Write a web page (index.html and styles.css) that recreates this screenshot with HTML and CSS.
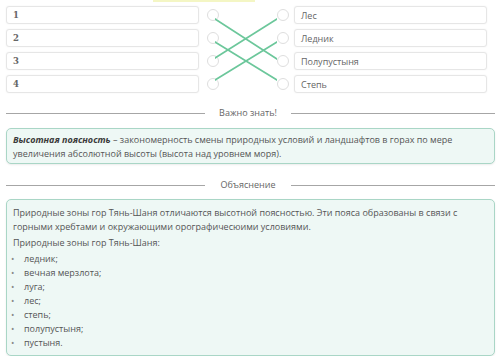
FILE: index.html
```html
<!DOCTYPE html>
<html lang="ru">
<head>
    <meta charset="UTF-8">
    <meta name="viewport" content="width=device-width, initial-scale=1.0">
    <title>Высотная поясность</title>
    <link rel="stylesheet" href="styles.css">
</head>
<body>
    <div class="top-mark"></div>

    <div class="match">
        <div class="cell left r1">1</div>
        <div class="cell left r2">2</div>
        <div class="cell left r3">3</div>
        <div class="cell left r4">4</div>

        <span class="dot dl r1"></span>
        <span class="dot dl r2"></span>
        <span class="dot dl r3"></span>
        <span class="dot dl r4"></span>

        <svg class="links" width="62" height="87" viewBox="0 0 62 87">
            <line x1="0" y1="13" x2="62" y2="53" />
            <line x1="0" y1="36" x2="62" y2="74" />
            <line x1="0" y1="52" x2="62" y2="13" />
            <line x1="0" y1="74" x2="62" y2="36" />
        </svg>

        <span class="dot dr r1"></span>
        <span class="dot dr r2"></span>
        <span class="dot dr r3"></span>
        <span class="dot dr r4"></span>

        <div class="cell right r1">Лес</div>
        <div class="cell right r2">Ледник</div>
        <div class="cell right r3">Полупустыня</div>
        <div class="cell right r4">Степь</div>
    </div>

    <div class="divider first"><span>Важно знать!</span></div>
    <div class="note short">
        <b>Высотная поясность</b> – закономерность смены природных условий и ландшафтов в горах по мере увеличения абсолютной высоты (высота над уровнем моря).
    </div>

    <div class="divider"><span>Объяснение</span></div>
    <div class="note">
        <p>Природные зоны гор Тянь-Шаня отличаются высотной поясностью. Эти пояса образованы в связи с горными хребтами и окружающими орографичесюими условиями.</p>
        <p>Природные зоны гор Тянь-Шаня:</p>
        <ul>
            <li>ледник;</li>
            <li>вечная мерзлота;</li>
            <li>луга;</li>
            <li>лес;</li>
            <li>степь;</li>
            <li>полупустыня;</li>
            <li>пустыня.</li>
        </ul>
    </div>
</body>
</html>
```

FILE: styles.css
```css
body {
    margin: 0;
    background: #fff;
    font-family: "Open Sans", "Noto Sans", sans-serif;
    font-size: 9px;
    color: #555;
    width: 500px;
    position: relative;
}
.top-mark {
    position: absolute;
    left: 153px;
    top: 0;
    width: 102px;
    height: 2px;
    background: #f4f6c4;
}
.match {
    display: grid;
    grid-template-columns: 197px 12px 62px 12px 198px;
    grid-template-rows: repeat(4, 18px);
    row-gap: 5px;
    padding: 6px 0 0 6px;
}
.cell {
    box-sizing: border-box;
    border: 1px solid #e6e6e6;
    border-radius: 3px;
    box-shadow: 0 0 2px rgba(0,0,0,0.06);
    padding: 0 6px;
    display: flex;
    align-items: center;
    background: #fff;
}
.left {
    grid-column: 1;
    font-family: "DejaVu Serif", "Liberation Serif", serif;
    font-weight: bold;
    color: #666;
    font-size: 8.5px;
    margin-right: 4px;
}
.right {
    grid-column: 5;
    margin-left: 5px;
    color: #666;
}
.dot {
    box-sizing: border-box;
    width: 12px;
    height: 12px;
    border: 1px solid #dedede;
    border-radius: 50%;
    align-self: center;
    background: #fff;
}
.dl { grid-column: 2; margin-left: 4px; }
.dr { grid-column: 4; }
.r1 { grid-row: 1; }
.r2 { grid-row: 2; }
.r3 { grid-row: 3; }
.r4 { grid-row: 4; }
.links {
    grid-column: 3;
    grid-row: 1 / 5;
}
.links line {
    stroke: #6cc79b;
    stroke-width: 1.8;
    stroke-linecap: round;
}
.divider {
    display: grid;
    grid-template-columns: 199px 86px 204px;
    align-items: center;
    margin: 14px 0 7px 6px;
    line-height: 14px;
    color: #666;
}
.divider.first {
    margin-top: 13px;
    margin-bottom: 8px;
}
.divider::before,
.divider::after {
    content: "";
    height: 1px;
    background: #a6a6a6;
}
.divider::before { grid-column: 1; grid-row: 1; }
.divider::after { grid-column: 3; grid-row: 1; }
.divider span {
    grid-column: 2;
    grid-row: 1;
    text-align: center;
}
.note {
    margin: 0 5px 0 6px;
    box-sizing: border-box;
    border: 1px solid #a9d6c6;
    border-radius: 5px;
    background: #eef8f5;
    box-shadow: 0 1px 2px rgba(0,0,0,0.08);
    padding: 6px 15px 5px 6px;
    line-height: 14px;
}
.note.short {
    padding: 4px 25px 2px 6px;
}
.note b {
    font-style: italic;
    color: #3a3a3a;
}
.note p {
    margin: 0 0 2px;
}
.note ul {
    margin: 2px 0 0;
    padding: 0;
    list-style: none;
}
.note li {
    position: relative;
    padding-left: 11px;
}
.note li::before {
    content: "•";
    position: absolute;
    left: -2px;
    color: #888;
}
```
